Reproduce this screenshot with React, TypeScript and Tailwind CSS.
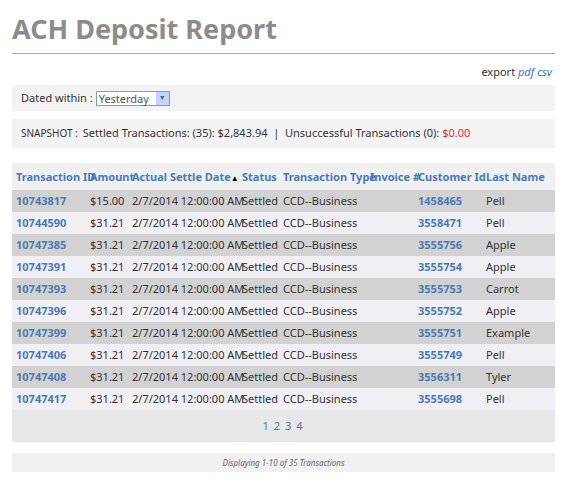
const rows = [
  ["10743817", "$15.00", "1458465", "Pell"],
  ["10744590", "$31.21", "3558471", "Pell"],
  ["10747385", "$31.21", "3555756", "Apple"],
  ["10747391", "$31.21", "3555754", "Apple"],
  ["10747393", "$31.21", "3555753", "Carrot"],
  ["10747396", "$31.21", "3555752", "Apple"],
  ["10747399", "$31.21", "3555751", "Example"],
  ["10747406", "$31.21", "3555749", "Pell"],
  ["10747408", "$31.21", "3556311", "Tyler"],
  ["10747417", "$31.21", "3555698", "Pell"],
];

const cols = "grid grid-cols-[74px_42px_110px_41px_87px_48px_68px_1fr] pl-[4px] whitespace-nowrap";

export default function App() {
  return (
    <div className="w-[567px] h-[488px] bg-white px-[12px] pt-[12px] text-[11px] text-[#333] font-[family-name:'Liberation_Sans',Arial,sans-serif]">
      <h1 className="text-[27px] font-bold text-[#8c8c8c] leading-[34px]">ACH Deposit Report</h1>
      <div className="mt-[7px] border-t border-[#aaa]" />
      <div className="mt-[11px] text-right pr-[3px] text-[11px] leading-[14px]">
        export <span className="italic text-[#3f74b8]">pdf</span> <span className="italic text-[#3f74b8]">csv</span>
      </div>
      <div className="mt-[6px] h-[26px] bg-[#f3f3f3] flex items-center pl-[9px] gap-[3px]">
        <span>Dated within :</span>
        <div className="w-[74px] h-[15px] border border-[#7f9db9] bg-white flex items-center justify-between pl-[2px] text-[#555]">
          <span className="leading-none">Yesterday</span>
          <span className="w-[13px] h-[13px] bg-[#c3d3fd] flex items-center justify-center text-[7px] text-[#4d6185]">▼</span>
        </div>
      </div>
      <div className="mt-[8px] h-[29px] bg-[#f3f3f3] flex items-center pl-[9px]">
        <span className="text-[10px] mr-[5px]">SNAPSHOT :</span>
        <span>Settled Transactions: (35): $2,843.94 &nbsp;|&nbsp; Unsuccessful Transactions (0): <span className="text-[#e0303a]">$0.00</span></span>
      </div>
      <div className="mt-[15px] bg-[#f0f0f0]">
        <div className={`${cols} h-[27px] items-end pb-[5px] font-bold text-[#4a7ab5]`}>
          <span>Transaction ID</span>
          <span>Amount</span>
          <span>Actual Settle Date<span className="text-[#000] text-[8px]">▲</span></span>
          <span>Status</span>
          <span>Transaction Type</span>
          <span>Invoice #</span>
          <span>Customer Id</span>
          <span>Last Name</span>
        </div>
        {rows.map((r, i) => (
          <div key={r[0]} className={`${cols} h-[22px] items-center ${i % 2 === 0 ? "bg-[#d2d2d2]" : "bg-[#efeff4]"}`}>
            <span className="font-bold text-[#4a7ab5]">{r[0]}</span>
            <span>{r[1]}</span>
            <span>2/7/2014 12:00:00 AM</span>
            <span>Settled</span>
            <span>CCD--Business</span>
            <span></span>
            <span className="font-bold text-[#4a7ab5]">{r[2]}</span>
            <span>{r[3]}</span>
          </div>
        ))}
        <div className="h-[32px] bg-[#e8e8e8] flex items-center justify-center gap-[5px] text-[#4a7ab5] pr-[2px]">
          <span>1</span><span>2</span><span>3</span><span>4</span>
        </div>
      </div>
      <div className="mt-[11px] h-[19px] bg-[#f1f1f1] flex items-center justify-center italic text-[8px] text-[#666]">
        Displaying 1-10 of 35 Transactions
      </div>
    </div>
  );
}
